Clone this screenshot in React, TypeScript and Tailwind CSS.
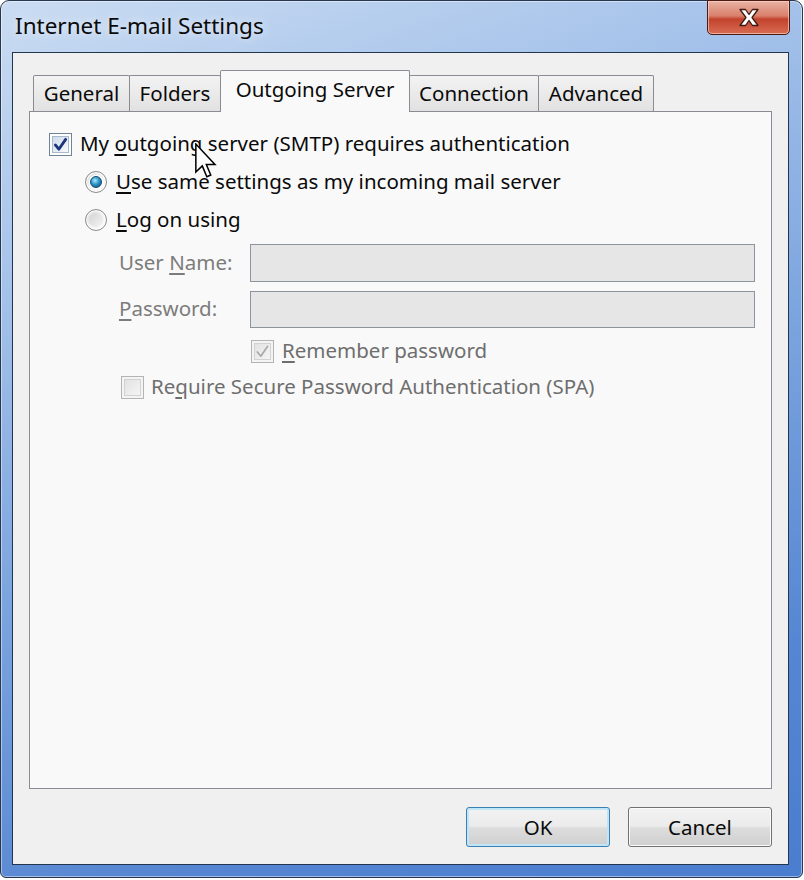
import React from 'react';

const CheckBox = ({ checked = false, disabled = false }: { checked?: boolean; disabled?: boolean }) => (
  <span
    className={`w-[23px] h-[23px] shrink-0 flex p-[2px] border ${
      disabled ? 'border-[#b4b4b4] bg-[#f4f4f4]' : 'border-[#6f8399] bg-white'
    }`}
  >
    <span
      className={`flex-1 flex items-center justify-center border ${
        disabled
          ? 'border-[#d2d2d2] bg-gradient-to-br from-[#e2e2e2] to-[#f5f5f5]'
          : 'border-[#a9b8cb] bg-gradient-to-br from-[#cfdcec] to-[#f7f9fc]'
      }`}
    >
      {checked && (
        <svg width="15" height="15" viewBox="0 0 16 16">
          <path
            d="M2.5 8.5 L6.2 13 L13.5 2.5"
            fill="none"
            stroke={disabled ? '#a8a8a8' : '#1b357a'}
            strokeWidth={disabled ? 1.8 : 3}
            strokeLinecap="round"
            strokeLinejoin="round"
          />
        </svg>
      )}
    </span>
  </span>
);

const Radio = ({ checked = false }: { checked?: boolean }) => (
  <span className="w-[22px] h-[22px] shrink-0 rounded-full border border-[#8b8b8b] bg-gradient-to-br from-[#d9d9d9] via-[#f2f2f2] to-white flex items-center justify-center shadow-[inset_0_0_0_1px_#ffffff]">
    {checked ? (
      <span className="w-[14px] h-[14px] rounded-full bg-white flex items-center justify-center">
        <span className="w-[12px] h-[12px] rounded-full border border-[#12486e] bg-[radial-gradient(circle_at_40%_35%,#a5ecff,#2d95c9_45%,#0b4670)]" />
      </span>
    ) : (
      <span className="w-[14px] h-[14px] rounded-full bg-gradient-to-br from-[#d4d4d4] to-[#f4f4f4]" />
    )}
  </span>
);

const Tab = ({ label, width, active = false }: { label: string; width: string; active?: boolean }) =>
  active ? (
    <div
      className={`${width} -ml-px h-[42px] -mb-px relative z-10 border border-b-0 border-[#898c95] rounded-t-[2px] bg-[#f9f9f9] flex items-center justify-center pb-[5px]`}
    >
      {label}
    </div>
  ) : (
    <div
      className={`${width} -ml-px first:ml-0 h-[36px] border border-b-0 border-[#898c95] rounded-t-[2px] bg-gradient-to-b from-[#f3f3f3] to-[#e1e1e1] flex items-center justify-center`}
    >
      {label}
    </div>
  );

const App = () => {
  return (
    <div className="relative w-[804px] h-[880px] bg-white font-['Noto_Sans',sans-serif] text-[20.5px] leading-none text-[#0a0a0a]">
      {/* window frame */}
      <div className="w-[803px] h-[878px] rounded-t-[9px] rounded-b-[6px] border border-[#27374f] bg-[linear-gradient(160deg,#cadcf2_0%,#a9c5eb_22%,#7ea6df_50%,#5686d2_80%,#4a7dcf_100%)] shadow-[inset_0_0_0_1px_rgba(255,255,255,0.45)] flex flex-col pl-[11px] pr-[13px] pb-[12px]">
        {/* title bar */}
        <div className="h-[51px] flex justify-between">
          <div className="ml-[3px] self-center pb-[1px] text-[22.5px] [text-shadow:0_0_10px_rgba(255,255,255,0.9)]">
            Internet E-mail Settings
          </div>
          <div className="-mr-[1px] w-[83px] h-[35px] -mt-px rounded-b-[5px] border border-[#4b1a12] bg-[linear-gradient(#e9b2a3,#d9806c_45%,#c2432d_55%,#d86c52)] shadow-[inset_0_0_0_1px_rgba(255,220,210,0.6)] flex items-center justify-center">
            <svg width="22" height="19" viewBox="0 0 22 19">
              <polygon
                points="2,1.5 7.5,1.5 11,6.5 14.5,1.5 20,1.5 14,9.5 20,17.5 14.5,17.5 11,12.5 7.5,17.5 2,17.5 8,9.5"
                fill="#ffffff"
                stroke="#3d1b14"
                strokeWidth="1.3"
                strokeLinejoin="round"
              />
            </svg>
          </div>
        </div>

        {/* client area */}
        <div className="flex-1 border border-[#24354f] bg-[#f0f0f0] flex flex-col px-[16px] pt-[17px] pb-[17px]">
          {/* tabs */}
          <div className="h-[41px] flex items-end pl-[4px]">
            <Tab label="General" width="w-[97px]" />
            <Tab label="Folders" width="w-[92px]" />
            <Tab label="Outgoing Server" width="w-[190px]" active />
            <Tab label="Connection" width="w-[130px]" />
            <Tab label="Advanced" width="w-[116px]" />
          </div>

          {/* tab panel */}
          <div className="flex-1 border border-[#898c95] bg-[#f9f9f9] flex flex-col pt-[13px]">
            <div className="h-[38px] flex items-center gap-[8px] pl-[19px]">
              <CheckBox checked />
              <span className="pb-[2px]">
                My <span className="underline underline-offset-[3px]">o</span>utgoing server (SMTP) requires authentication
              </span>
            </div>
            <div className="h-[38px] flex items-center gap-[9px] pl-[55px]">
              <Radio checked />
              <span className="pb-[2px]">
                <span className="underline underline-offset-[3px]">U</span>se same settings as my incoming mail server
              </span>
            </div>
            <div className="h-[38px] flex items-center gap-[9px] pl-[55px]">
              <Radio />
              <span className="pb-[2px]">
                <span className="underline underline-offset-[3px]">L</span>og on using
              </span>
            </div>

            <div className="mt-[5px] h-[38px] flex items-center pl-[89px] pr-[16px] text-[#7c7c7c]">
              <span className="w-[131px] shrink-0 pb-[2px]">
                User <span className="underline underline-offset-[3px]">N</span>ame:
              </span>
              <div className="flex-1 h-full border border-[#8c949e] bg-[#e6e6e6]" />
            </div>
            <div className="mt-[9px] h-[37px] flex items-center pl-[89px] pr-[16px] text-[#7c7c7c]">
              <span className="w-[131px] shrink-0 pb-[2px]">
                <span className="underline underline-offset-[3px]">P</span>assword:
              </span>
              <div className="flex-1 h-full border border-[#8c949e] bg-[#e6e6e6]" />
            </div>

            <div className="mt-[4px] h-[38px] flex items-center gap-[8px] pl-[221px] text-[#6e6e6e]">
              <CheckBox checked disabled />
              <span className="pb-[2px]">
                <span className="underline underline-offset-[3px]">R</span>emember password
              </span>
            </div>
            <div className="h-[34px] flex items-center gap-[7px] pl-[91px] text-[#6e6e6e]">
              <CheckBox disabled />
              <span className="pb-[2px]">
                Re<span className="underline underline-offset-[3px]">q</span>uire Secure Password Authentication (SPA)
              </span>
            </div>
          </div>

          {/* buttons */}
          <div className="mt-[18px] h-[40px] flex justify-end gap-[18px]">
            <button className="w-[144px] h-[40px] rounded-[3px] border border-[#3c7fb1] bg-[linear-gradient(#f2f2f2,#ebebeb_48%,#dddddd_52%,#cfcfcf)] shadow-[inset_0_0_0_2px_#bfe6f7] text-[#0a0a0a]">
              OK
            </button>
            <button className="w-[144px] h-[40px] rounded-[3px] border border-[#707070] bg-[linear-gradient(#f2f2f2,#ebebeb_48%,#dddddd_52%,#cfcfcf)] shadow-[inset_0_0_0_1px_#fbfbfb] text-[#0a0a0a]">
              Cancel
            </button>
          </div>
        </div>
      </div>

      {/* mouse pointer */}
      <svg className="absolute left-[195px] top-[143px]" width="22" height="36" viewBox="0 0 13 21">
        <path
          d="M0.5 0.5 L0.5 17 L4.3 13.4 L7 19.8 L9.3 18.8 L6.7 12.6 L11.8 12.6 Z"
          fill="#ffffff"
          stroke="#000000"
          strokeWidth="0.9"
          strokeLinejoin="miter"
        />
      </svg>
    </div>
  );
};

export default App;
